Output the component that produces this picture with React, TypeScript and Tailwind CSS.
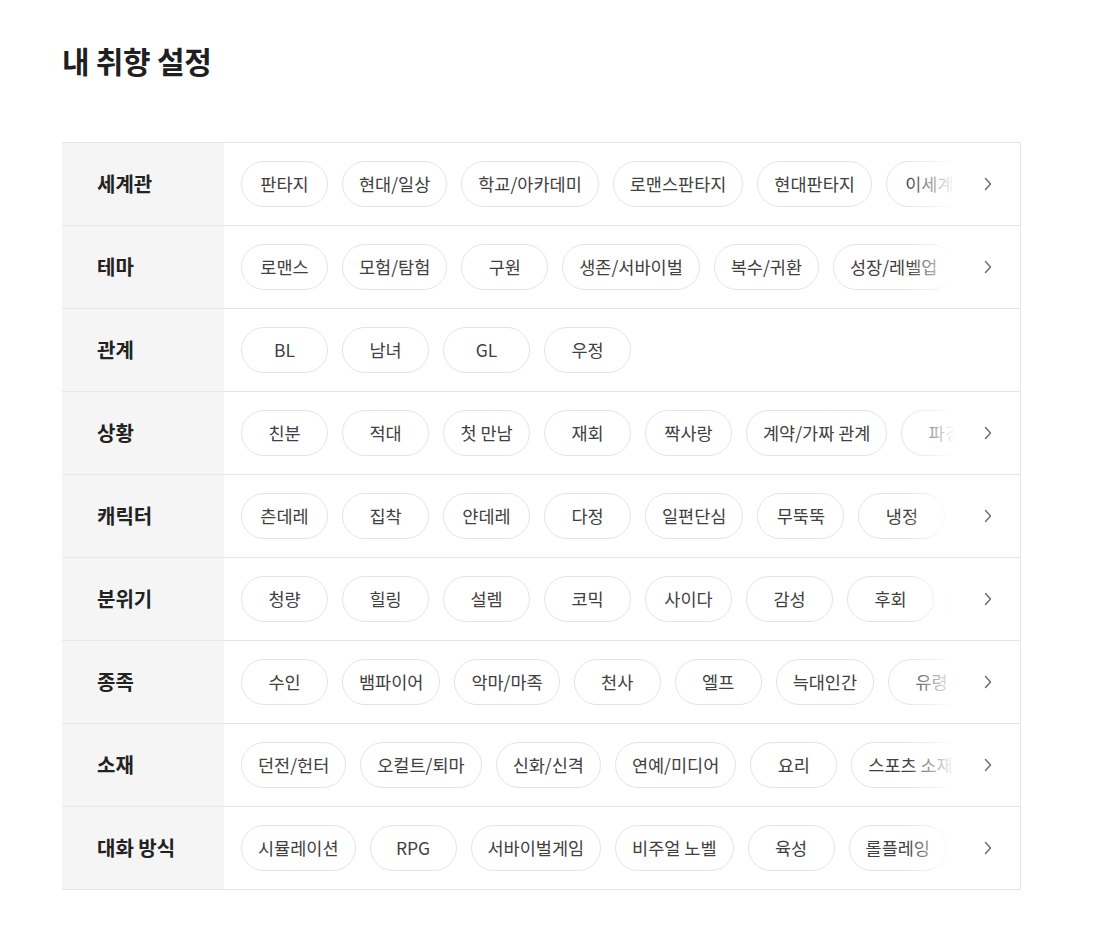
import React from 'react';

interface PreferenceRow {
  label: string;
  tags: string[];
  more: boolean;
}

const rows: PreferenceRow[] = [
  { label: '세계관', tags: ['판타지', '현대/일상', '학교/아카데미', '로맨스판타지', '현대판타지', '이세계', '무협'], more: true },
  { label: '테마', tags: ['로맨스', '모험/탐험', '구원', '생존/서바이벌', '복수/귀환', '성장/레벨업', '힐링'], more: true },
  { label: '관계', tags: ['BL', '남녀', 'GL', '우정'], more: false },
  { label: '상황', tags: ['친분', '적대', '첫 만남', '재회', '짝사랑', '계약/가짜 관계', '파경', '동거'], more: true },
  { label: '캐릭터', tags: ['츤데레', '집착', '얀데레', '다정', '일편단심', '무뚝뚝', '냉정', '능글'], more: true },
  { label: '분위기', tags: ['청량', '힐링', '설렘', '코믹', '사이다', '감성', '후회', '피폐'], more: true },
  { label: '종족', tags: ['수인', '뱀파이어', '악마/마족', '천사', '엘프', '늑대인간', '유령', '용'], more: true },
  { label: '소재', tags: ['던전/헌터', '오컬트/퇴마', '신화/신격', '연예/미디어', '요리', '스포츠 소재', '음악'], more: true },
  { label: '대화 방식', tags: ['시뮬레이션', 'RPG', '서바이벌게임', '비주얼 노벨', '육성', '롤플레잉', '추리'], more: true },
];

const Chevron = () => (
  <svg width="8" height="14" viewBox="0 0 8 14" fill="none">
    <polyline points="1.5,1.5 6.5,7 1.5,12.5" stroke="#6b6b6b" strokeWidth="1.4" strokeLinecap="round" strokeLinejoin="round" />
  </svg>
);

const Tag = ({ text }: { text: string }) => (
  <button
    type="button"
    className="shrink-0 h-[46px] min-w-[87px] px-[16px] rounded-full border border-[#e4e4e4] bg-white text-[17.5px] text-[#404040] whitespace-nowrap flex items-center justify-center"
  >
    {text}
  </button>
);

export default function App() {
  return (
    <div className="min-h-screen bg-white px-[62px] pt-[40px] pb-[44px]" style={{ fontFamily: '"Noto Sans CJK KR", "Noto Sans", sans-serif' }}>
      <h1 className="text-[30px] font-bold text-[#1f1f1f] leading-[40px] tracking-[-0.3px]">내 취향 설정</h1>

      <div className="mt-[62px] w-[959px] border-t border-r border-[#e6e6e6]">
        {rows.map((row) => (
          <div key={row.label} className="flex h-[83px] border-b border-[#e6e6e6]">
            <div className="w-[162px] shrink-0 bg-[#f5f5f5] pl-[35px] flex items-center text-[20px] font-semibold text-[#222]">
              {row.label}
            </div>
            <div className="relative flex-1 overflow-hidden flex items-center gap-[14px] pl-[17px]">
              {row.tags.map((tag) => (
                <Tag key={tag} text={tag} />
              ))}
              {row.more && (
                <div className="absolute right-0 top-0 h-full w-[48px] bg-gradient-to-r from-white/0 to-white" />
              )}
            </div>
            <div className="w-[65px] shrink-0 flex items-center justify-center">
              {row.more && <Chevron />}
            </div>
          </div>
        ))}
      </div>
    </div>
  );
}
